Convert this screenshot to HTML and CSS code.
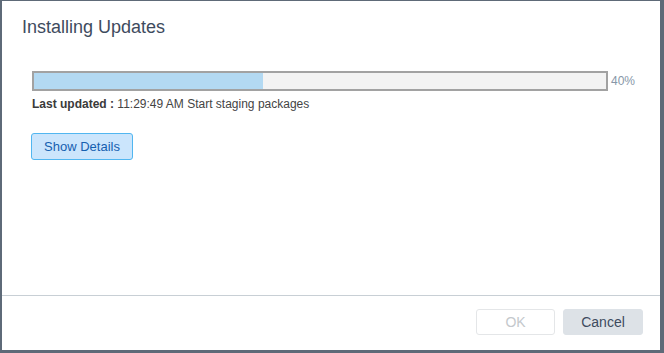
FILE: index.html
```html
<!DOCTYPE html>
<html lang="en">
<head>
  <meta charset="UTF-8" />
  <title>Installing Updates</title>
  <link rel="stylesheet" href="styles.css">
</head>
<body>
  <div class="dialog">
    <div class="dialog-header">
      <h1>Installing Updates</h1>
    </div>

    <div class="dialog-body">
      <div class="progress-row">
        <div class="progress">
          <div class="progress-fill" style="width: 40%"></div>
        </div>
        <span class="progress-label">40%</span>
      </div>
      <p class="status"><b>Last updated :</b> 11:29:49 AM Start staging packages</p>

      <button class="details-btn">Show Details</button>
    </div>

    <div class="dialog-footer">
      <button class="btn btn-ok" disabled>OK</button>
      <button class="btn btn-cancel">Cancel</button>
    </div>
  </div>
</body>
</html>
```

FILE: styles.css
```css
* {
  margin: 0;
  padding: 0;
  box-sizing: border-box;
}

html, body {
  height: 100%;
  overflow: hidden;
}

body {
  background: #5e6a78;
  font-family: 'Liberation Sans', Arial, sans-serif;
  padding: 1px 4px 3px 2px;
}

.dialog {
  background: #fff;
  height: 100%;
  display: flex;
  flex-direction: column;
}

.dialog-header {
  padding: 14px 20px 0;
}

.dialog-header h1 {
  font-size: 18px;
  font-weight: normal;
  color: #3e4b5e;
  line-height: 24px;
}

.dialog-body {
  flex: 1;
  padding: 32px 0 0 30px;
}

.progress-row {
  display: flex;
  align-items: center;
}

.progress {
  width: 576px;
  height: 20px;
  border: 2px solid #a2a2a2;
  background: #f3f3f3;
}

.progress-fill {
  height: 100%;
  background: #b3d9f2;
}

.progress-label {
  font-size: 12px;
  color: #8797a8;
  margin-left: 3px;
}

.status {
  font-size: 12px;
  color: #444;
  margin-top: 5px;
  line-height: 16px;
}

.status b {
  color: #3a3a3a;
}

.details-btn {
  margin: 21px 0 0 -1px;
  font-family: inherit;
  font-size: 13px;
  color: #1560b0;
  background: #cbe5fc;
  border: 1px solid #51b6f0;
  border-radius: 3px;
  width: 102px;
  height: 27px;
  cursor: pointer;
}

.dialog-footer {
  border-top: 1px solid #c8cfd5;
  height: 55px;
  display: flex;
  justify-content: flex-end;
  align-items: center;
  gap: 8px;
  padding: 0 17px 2px 0;
}

.btn {
  font-family: inherit;
  font-size: 14px;
  width: 80px;
  height: 26px;
  border-radius: 3px;
}

.btn-ok {
  width: 79px;
  background: #fff;
  border: 1px solid #e4e6e8;
  color: #c4c8cc;
}

.btn-cancel {
  background: #dde2e7;
  border: 1px solid #dde2e7;
  color: #3e4b5e;
  cursor: pointer;
}
```
